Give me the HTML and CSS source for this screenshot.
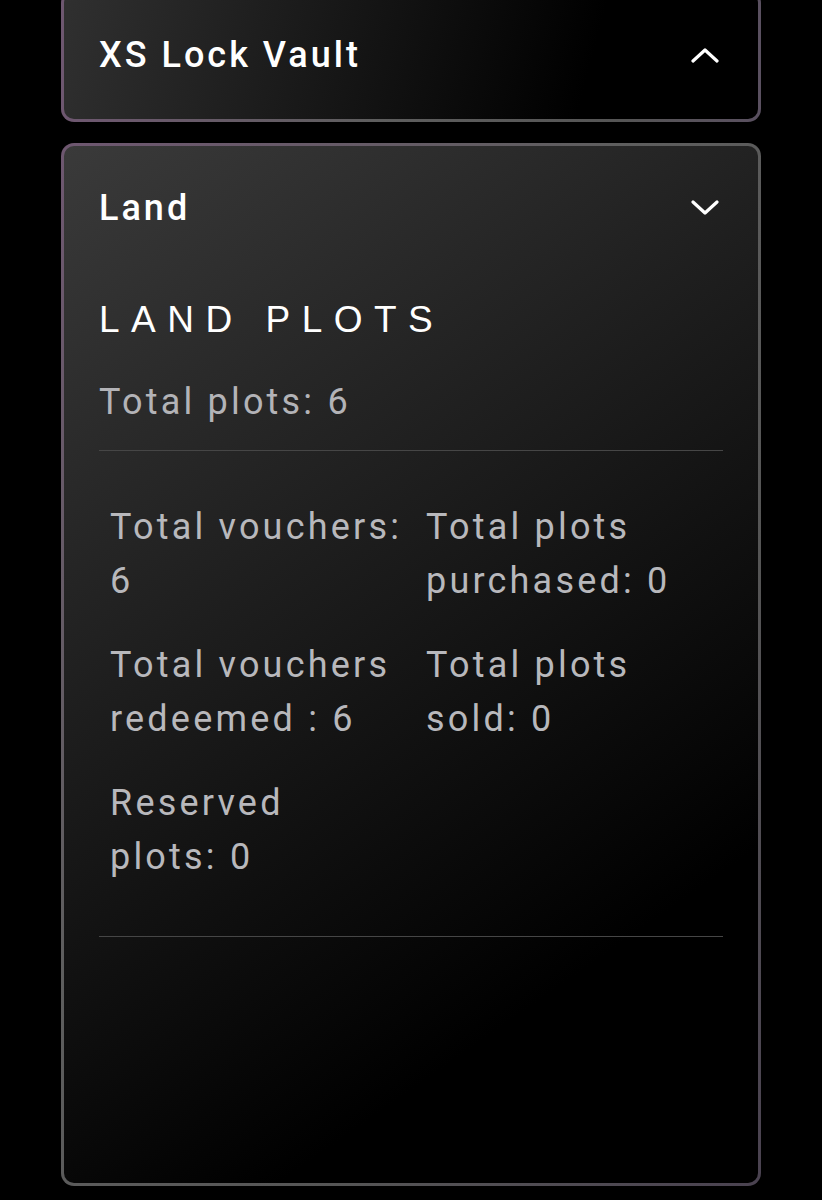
FILE: index.html
```html
<!DOCTYPE html>
<html lang="en">
<head>
  <meta charset="UTF-8">
  <meta name="viewport" content="width=device-width, initial-scale=1.0">
  <title>Land</title>
  <link rel="stylesheet" href="styles.css">
</head>
<body>
  <div class="panel panel-top">
    <div class="panel-header">
      <span class="panel-title">XS Lock Vault</span>
      <svg class="chevron" width="28" height="16" viewBox="0 0 28 16"><path d="M2 14 L14 3 L26 14" fill="none" stroke="#fff" stroke-width="3.2" stroke-linecap="round" stroke-linejoin="round"/></svg>
    </div>
  </div>

  <div class="panel panel-land">
    <div class="panel-header">
      <span class="panel-title">Land</span>
      <svg class="chevron" width="28" height="16" viewBox="0 0 28 16"><path d="M2 2 L14 13 L26 2" fill="none" stroke="#fff" stroke-width="3.2" stroke-linecap="round" stroke-linejoin="round"/></svg>
    </div>
    <div class="panel-body">
      <h3 class="section-title">LAND PLOTS</h3>
      <p class="total">Total plots: 6</p>
      <hr class="divider">
      <div class="stats">
        <div class="stat">Total vouchers:<br>6</div>
        <div class="stat">Total plots<br>purchased: 0</div>
        <div class="stat">Total vouchers<br>redeemed : 6</div>
        <div class="stat">Total plots<br>sold: 0</div>
        <div class="stat">Reserved<br>plots: 0</div>
      </div>
      <hr class="divider">
    </div>
  </div>
</body>
</html>
```

FILE: styles.css
```css
body {
  background: #000;
  margin: 0;
  padding: 0 61px;
  font-family: 'Roboto', 'Liberation Sans', sans-serif;
  color: #fff;
}

.panel {
  border: 3px solid transparent;
  border-radius: 13px;
  background:
    linear-gradient(145deg, #3a3a3a, #000 78%) padding-box,
    linear-gradient(to bottom right, #6e5770, #5e5e5e 40%, #555 70%, #4a4250) border-box;
  margin-bottom: 21px;
}

.panel-top {
  margin-top: -10px;
  background:
    linear-gradient(105deg, #303030, #000 75%) padding-box,
    linear-gradient(to right, #6e5770, #5e5e5e 45%, #555 80%, #5a5060) border-box;
}

.panel-header {
  display: flex;
  justify-content: space-between;
  align-items: center;
  padding: 35px 39px 37px 35px;
}

.panel-title {
  font-size: 36px;
  line-height: 54px;
  font-weight: 500;
  letter-spacing: 3px;
}

.panel-body {
  padding: 21px 35px 246px;
}

.section-title {
  margin: 0;
  font-family: 'Liberation Sans', sans-serif;
  font-weight: normal;
  font-size: 37px;
  line-height: 54px;
  letter-spacing: 11.5px;
}

.total {
  margin: 28px 0 21px;
  font-size: 36px;
  line-height: 54px;
  letter-spacing: 3.2px;
  color: #b3b3b7;
}

.divider {
  border: none;
  border-top: 1.5px solid #464646;
  margin: 0;
}

.stats {
  display: grid;
  grid-template-columns: 316px 1fr;
  row-gap: 30px;
  padding-left: 11px;
  margin: 49px 0 52px;
}

.stat {
  font-size: 36px;
  line-height: 54px;
  letter-spacing: 3.2px;
  color: #b8b8bc;
}
```
